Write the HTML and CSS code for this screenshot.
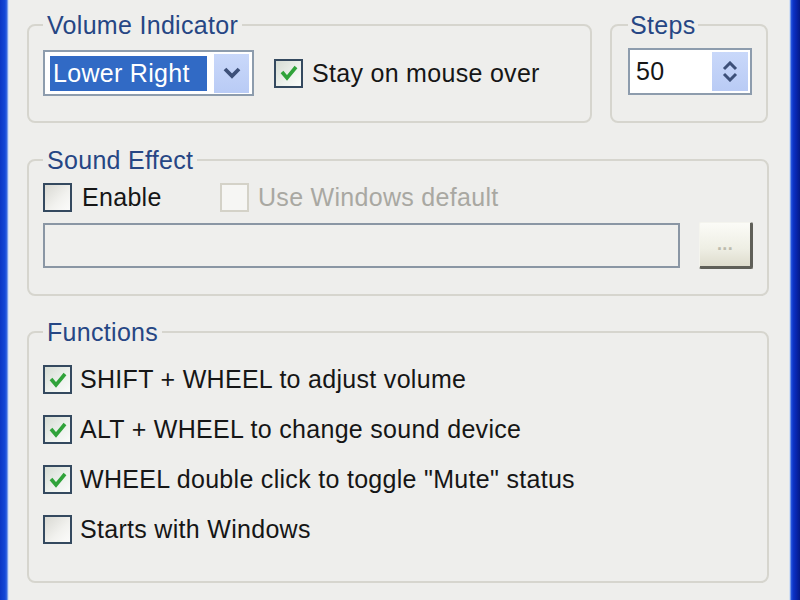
FILE: index.html
```html
<!DOCTYPE html>
<html>
<head>
<meta charset="utf-8">
<link rel="stylesheet" href="styles.css">
</head>
<body>
<div class="window">
  <div class="edge edge-left"></div>
  <div class="panel">
    <div class="row-top">
      <fieldset class="group group-volume">
        <legend>Volume Indicator</legend>
        <div class="line">
          <div class="combo">
            <span class="combo-value">Lower Right</span>
            <span class="combo-btn"><svg width="20" height="14" viewBox="0 0 20 14"><polyline points="3,3 10,10 17,3" fill="none" stroke="#3d5079" stroke-width="3.8"/></svg></span>
          </div>
          <div class="check checked gap9"><span class="box"><svg width="22" height="22" viewBox="0 0 22 22"><polyline points="4,10 9,16 18,5" fill="none" stroke="#2fa33a" stroke-width="3.6"/></svg></span><span class="text">Stay on mouse over</span></div>
        </div>
      </fieldset>
      <fieldset class="group group-steps">
        <legend>Steps</legend>
        <div class="spin">
          <span class="spin-value">50</span>
          <span class="spin-btn">
            <svg width="16" height="10" viewBox="0 0 16 10"><polyline points="2,8 8,2 14,8" fill="none" stroke="#3d5079" stroke-width="3"/></svg>
            <svg width="16" height="10" viewBox="0 0 16 10"><polyline points="2,2 8,8 14,2" fill="none" stroke="#3d5079" stroke-width="3"/></svg>
          </span>
        </div>
      </fieldset>
    </div>

    <fieldset class="group group-sound">
      <legend>Sound Effect</legend>
      <div class="sound-row1">
        <div class="check gap10"><span class="box"></span><span class="text">Enable</span></div>
        <div class="check disabled gap9"><span class="box"></span><span class="text">Use Windows default</span></div>
      </div>
      <div class="sound-row2">
        <div class="field"></div>
        <div class="browse"><span>...</span></div>
      </div>
    </fieldset>

    <fieldset class="group group-func">
      <legend>Functions</legend>
      <div class="func-list">
        <div class="check checked"><span class="box"><svg width="22" height="22" viewBox="0 0 22 22"><polyline points="4,10 9,16 18,5" fill="none" stroke="#2fa33a" stroke-width="3.6"/></svg></span><span class="text">SHIFT + WHEEL to adjust volume</span></div>
        <div class="check checked"><span class="box"><svg width="22" height="22" viewBox="0 0 22 22"><polyline points="4,10 9,16 18,5" fill="none" stroke="#2fa33a" stroke-width="3.6"/></svg></span><span class="text">ALT + WHEEL to change sound device</span></div>
        <div class="check checked"><span class="box"><svg width="22" height="22" viewBox="0 0 22 22"><polyline points="4,10 9,16 18,5" fill="none" stroke="#2fa33a" stroke-width="3.6"/></svg></span><span class="text">WHEEL double click to toggle "Mute" status</span></div>
        <div class="check"><span class="box"></span><span class="text">Starts with Windows</span></div>
      </div>
    </fieldset>
  </div>
  <div class="edge edge-right"></div>
</div>
</body>
</html>
```

FILE: styles.css
```css
* { box-sizing: border-box; }
html, body { margin: 0; padding: 0; }
body {
  width: 800px;
  height: 600px;
  overflow: hidden;
  background: #eeeeec;
  font-family: "Liberation Sans", Arial, sans-serif;
  font-size: 25px;
  letter-spacing: 0.3px;
  color: #161616;
}
.window {
  display: flex;
  width: 800px;
  height: 600px;
}
.edge-left {
  width: 10px;
  background: linear-gradient(to right, #0a36c4 0, #1247d8 5px, #3a6ae0 7px, #b8d0f2 8px, #e8eef6 9px, #eeeeec 10px);
}
.edge-right {
  width: 11px;
  background: linear-gradient(to right, #e6ecf4 0, #bcd0f0 1px, #2a5ae0 2px, #0c34c8 4px, #0826b0 7px, #041a88 11px);
}
.panel {
  flex: 1;
  padding: 11px 20px 0 17px;
  display: flex;
  flex-direction: column;
}
.row-top {
  display: flex;
  gap: 18px;
  align-items: stretch;
}
.group {
  margin: 0;
  border: 2px solid #d6d5ce;
  border-radius: 8px;
  min-width: 0;
}
.group legend {
  color: #264684;
  line-height: 28px;
  padding: 0 4px;
}
.group-volume {
  width: 565px;
  padding: 11px 15px 25px 14px;
}
.group-steps {
  width: 158px;
  padding: 9px 14px 0 16px;
}
.group-steps legend { padding: 0 3px 0 2px; }
.line {
  display: flex;
  align-items: center;
  gap: 20px;
}
.combo {
  width: 211px;
  height: 46px;
  border: 2px solid #8d9cad;
  background: #fff;
  display: flex;
  align-items: center;
  padding: 0 3px 0 5px;
  justify-content: space-between;
}
.combo-value {
  background: #316ac5;
  color: #fff;
  width: 157px;
  height: 35px;
  line-height: 35px;
  padding-left: 3px;
  white-space: nowrap;
}
.combo-btn {
  width: 35px;
  height: 39px;
  background: linear-gradient(#c9d8fa, #b9cbf5);
  display: flex;
  align-items: center;
  justify-content: center;
}
.check {
  display: flex;
  align-items: center;
  gap: 8px;
  height: 29px;
  white-space: nowrap;
}
.check.gap9 { gap: 9px; }
.check.gap10 { gap: 10px; }
.box {
  width: 29px;
  height: 29px;
  flex: none;
  border: 2px solid #34495f;
  background: linear-gradient(135deg, #d9d9d3, #f2f2ef 60%, #fbfbfa);
  display: flex;
  align-items: center;
  justify-content: center;
}
.checked .box {
  background: linear-gradient(135deg, #d6dcd4, #eef2ee 60%, #fafcfa);
}
.disabled .box {
  border-color: #d4d2c8;
  background: #f6f6f4;
}
.disabled .text { color: #a9a8a2; }
.spin {
  width: 124px;
  height: 47px;
  border: 2px solid #8d9cad;
  background: #fff;
  display: flex;
  align-items: center;
  justify-content: space-between;
  padding: 0 2px 0 6px;
}
.spin-btn {
  width: 36px;
  height: 39px;
  background: linear-gradient(#c9d8fa, #b9cbf5);
  display: flex;
  flex-direction: column;
  align-items: center;
  justify-content: center;
  gap: 1px;
}
.group-sound {
  margin-top: 23px;
  padding: 9px 14px 25px 14px;
}
.sound-row1 {
  display: flex;
  align-items: center;
  gap: 0;
}
.sound-row1 .check:first-child { width: 177px; }
.sound-row2 {
  display: flex;
  align-items: center;
  gap: 19px;
  margin-top: 10px;
  height: 47px;
}
.field {
  flex: 1;
  height: 45px;
  border: 2px solid #8a96a4;
  background: #efefed;
}
.browse {
  width: 54px;
  height: 47px;
  background: linear-gradient(#fbfbf7, #eeeee4 60%, #dedccd);
  border-top: 1px solid #f4f4ee;
  border-left: 1px solid #f4f4ee;
  border-right: 3px solid #5f5f58;
  border-bottom: 3px solid #5f5f58;
  border-radius: 2px;
  display: flex;
  align-items: center;
  justify-content: center;
  color: #bdbcae;
  font-size: 18px;
  font-weight: bold;
}
.group-func {
  margin-top: 22px;
  padding: 19px 14px 37px 14px;
}
.func-list {
  display: flex;
  flex-direction: column;
  gap: 21px;
}
```
